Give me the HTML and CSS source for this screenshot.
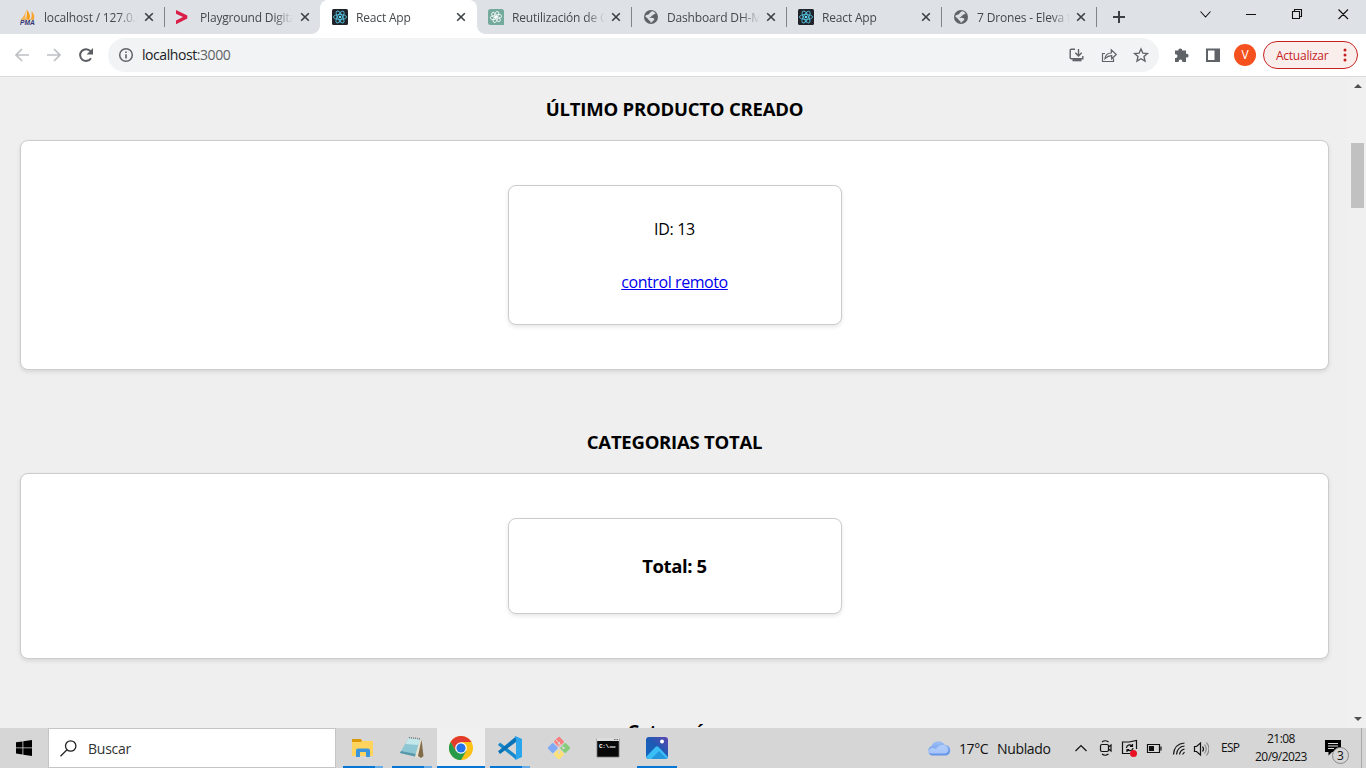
FILE: index.html
```html
<!DOCTYPE html>
<html lang="es">
<head>
<meta charset="utf-8">
<title>React App</title>
<link rel="stylesheet" href="styles.css">
</head>
<body>
<svg class="defs" width="0" height="0">
  <symbol id="x" viewBox="0 0 10 10"><path d="M1.2 1.2l7.6 7.6M8.8 1.2L1.2 8.8" stroke="#3c4043" stroke-width="1.6" fill="none"/></symbol>
  <symbol id="react" viewBox="0 0 16 16"><rect width="16" height="16" rx="1.5" fill="#20232a"/><g fill="none" stroke="#53bcd8" stroke-width=".9"><ellipse cx="8" cy="8" rx="6.6" ry="2.5"/><ellipse cx="8" cy="8" rx="6.6" ry="2.5" transform="rotate(60 8 8)"/><ellipse cx="8" cy="8" rx="6.6" ry="2.5" transform="rotate(120 8 8)"/></g><circle cx="8" cy="8" r="1.3" fill="#61dafb"/></symbol>
  <symbol id="globe" viewBox="0 0 16 16"><circle cx="8" cy="8" r="7" fill="#5f6368"/><path d="M9.500 2.300c1.400.4 2.500 1.200 3.200 2.300-1 0-1.200.9-2 1-.9.1-.8 1.100-1.700 1.200-.7.1-.6 1-1.300 1.100H6.500c0 .9 1 .8 2 .9 1.700.2 3 .5 2.800 1.700-.2 1.200-1.500 1-1.900 2-.2.8-1 1.200-1.600 1.100-.8-.1-.4-1.200-.5-1.800-1-.2-1.900-.9-2.100-1.900L2.300 7.500C2.600 6.300 3.400 5.900 4.500 5.800c1.200 0 1.400-.5 1.900-1.200.7-.3.500-1.200 1.300-1.600.4-.4 1-.7 1.800-.7z" fill="#dee1e6"/></symbol>
</svg>

<header class="tabstrip">
  <div class="tab wide">
    <svg class="fav" viewBox="0 0 16 16"><path d="M5.500 1.500v8.500H1.200C3.500 8 5 5 5.500 1.500z" fill="#f9b24e"/><path d="M6.500.5c3 3 4 6.500 3 9.500H6.300c.8-3 .8-6 .2-9.500z" fill="#f89c0e"/><path d="M11.500 2c2.500 2.500 3.300 5.500 2.500 8h-3c.8-2.500.9-5 .5-8z" fill="#f9a52b"/><path d="M1 10.500h13" stroke="#e9a24a" stroke-width=".8"/><text x="0" y="15.500" class="pma">PMA</text></svg>
    <span class="title">localhost / 127.0.0.1</span><svg class="close"><use href="#x"/></svg><i class="sep"></i>
  </div>
  <div class="tab wide">
    <svg class="fav" viewBox="0 0 16 16"><path d="M0 1l11.300 5.400v3.200L0 15.200v-3.800L7 8 0 4.800z" fill="#d91e48"/></svg>
    <span class="title">Playground Digital</span><svg class="close"><use href="#x"/></svg>
  </div>
  <div class="tab wide active">
    <svg class="fav"><use href="#react"/></svg><span class="title">React App</span><svg class="close"><use href="#x"/></svg>
  </div>
  <div class="tab">
    <svg class="fav" viewBox="0 0 16 16"><path d="M2.500 0h11A2.500 2.500 0 0 1 16 2.500V16H2.500A2.500 2.500 0 0 1 0 13.500v-11A2.500 2.500 0 0 1 2.500 0z" fill="#74aa9c"/><g fill="none" stroke="#fff" stroke-width=".8"><ellipse id="p" cx="8.700" cy="5.300" rx="1.900" ry="3" transform="rotate(28 8.700 5.300)"/><use href="#p" transform="rotate(60 8 8)"/><use href="#p" transform="rotate(120 8 8)"/><use href="#p" transform="rotate(180 8 8)"/><use href="#p" transform="rotate(240 8 8)"/><use href="#p" transform="rotate(300 8 8)"/></g></svg>
    <span class="title">Reutilización de Código</span><svg class="close"><use href="#x"/></svg><i class="sep"></i>
  </div>
  <div class="tab"><svg class="fav"><use href="#globe"/></svg><span class="title">Dashboard DH-Market</span><svg class="close"><use href="#x"/></svg><i class="sep"></i></div>
  <div class="tab"><svg class="fav"><use href="#react"/></svg><span class="title">React App</span><svg class="close"><use href="#x"/></svg><i class="sep"></i></div>
  <div class="tab"><svg class="fav"><use href="#globe"/></svg><span class="title">7 Drones - Eleva tu vuelo</span><svg class="close"><use href="#x"/></svg><i class="sep"></i></div>
  <svg class="plus" width="12" height="12" viewBox="0 0 12 12"><path d="M6 0v12M0 6h12" stroke="#3c4043" stroke-width="2"/></svg>
  <svg class="winctl" width="166" height="34" viewBox="0 0 166 34" fill="none" stroke="#111" stroke-width="1.100"><path d="M.5 11.500l5 5.500 5-5.500M46 14.500h10M92.500 11.500h7v7h-7zM94.500 11.500v-2h7v7h-2M138.500 9.500l9.500 9.500M148 9.500l-9.500 9.500"/></svg>
</header>

<div class="toolbar">
  <svg class="nav" width="80" height="20" viewBox="0 0 80 20" fill="none" stroke-width="1.700"><path d="M15 10H2.500M8 4l-6 6 6 6M33 10h12.500M40 4l6 6-6 6" stroke="#bdc0c3"/><path d="M77 13.200A5.900 5.900 0 1 1 76.500 6.200" stroke="#5a5e63" stroke-width="2"/><path d="M79 3v6.400h-6.400z" fill="#5a5e63"/></svg>
  <div class="omnibox">
    <svg width="16" height="16" viewBox="0 0 16 16"><circle cx="8" cy="8" r="6.300" fill="none" stroke="#5f6368" stroke-width="1.500"/><path d="M8 7.200v4.200M8 4.400v1.600" stroke="#5f6368" stroke-width="1.600"/></svg>
    <span class="url">localhost<span>:3000</span></span>
    <svg class="actions" width="82" height="18" viewBox="0 0 82 18" fill="none" stroke="#5f6368" stroke-width="1.400"><path d="M7 3.200H3.200q-1 0-1 1v7.600q0 1 1 1h11.600V10M10.500 3v6.500M7.300 6.700l3.200 3.200 3.200-3.200"/><path d="M4.500 14.200h9" stroke-width="2.200"/><path d="M37 7.500h-2.500V15.500h11V12.500M37 12.500c.5-3.500 2.700-5.500 6.300-5.500V3.800l5 4.700-4.600 4.300V9.700c-2.800 0-4.600.8-6.700 2.800z" stroke-width="1.200"/><path d="M73 3l1.900 4.200 4.500.4-3.400 3 1 4.400-4-2.300-4 2.300 1-4.400-3.400-3 4.500-.4z"/></svg>
  </div>
  <svg class="ext" width="48" height="18" viewBox="0 0 48 18"><path d="M2 4.500h3.300a2 2 0 0 1 4 0H13v3.300h.700a1.900 1.900 0 0 1 0 3.800H13V16H9.300v-.8a1.800 1.800 0 0 0-3.600 0v.8H2v-4h.6a1.900 1.900 0 0 0 0-3.800H2z" fill="#5f6368"/><path d="M33 2.500h14v13.500H33zM35 4.500v9.500h6.500V4.500z" fill="#5f6368" fill-rule="evenodd"/></svg>
  <div class="avatar">V</div>
  <div class="update"><span>Actualizar</span><svg width="4" height="14" viewBox="0 0 4 14" fill="#c5221f"><circle cx="2" cy="2" r="1.500"/><circle cx="2" cy="7" r="1.500"/><circle cx="2" cy="12" r="1.500"/></svg></div>
</div>

<div class="viewport">
  <main class="page">
    <h3 class="last">ÚLTIMO PRODUCTO CREADO</h3>
    <section class="panel">
      <div class="card product"><p>ID: 13</p><a href="#">control remoto</a></div>
    </section>
    <h3 class="cats">CATEGORIAS TOTAL</h3>
    <section class="panel">
      <div class="card total"><h3>Total: 5</h3></div>
    </section>
    <h3 class="next">Categorías</h3>
  </main>
  <div class="scrollbar"><i class="up"></i><i class="thumb"></i><i class="down"></i></div>
</div>

<footer class="taskbar">
  <div class="start"><svg width="16" height="16" viewBox="0 0 16 16"><path d="M0 2.300l6.500-.9v6.100H0zM7.300 1.300L16 0v7.500H7.300zM0 8.300h6.500v6.200L0 13.600zM7.300 8.300H16V16l-8.700-1.300z"/></svg></div>
  <div class="search"><svg width="17" height="17" viewBox="0 0 17 17" fill="none" stroke="#222" stroke-width="1.300"><circle cx="10.700" cy="6" r="5.200"/><path d="M7 9.700L.5 16.300"/></svg><span>Buscar</span></div>
  <div class="apps">
    <div class="app run stack"><svg width="24" height="24" viewBox="0 0 24 24"><path d="M1 3h9l1 2h11v15H1z" fill="#ffd45e"/><path d="M1 3h9l1 2-1 1H1z" fill="#dd9a08"/><path d="M5 21v-6.500q0-2 2-2h10q2 0 2 2V21h-4v-5H9v5z" fill="#3a95dc"/></svg></div>
    <div class="app run stack"><svg width="24" height="24" viewBox="0 0 24 24"><path d="M9 1.500l13 2L21 22l-6-1z" fill="#e9e2cf"/><path d="M21.500 3.500L23.500 20 21 22l-3-2z" fill="#806c48"/><path d="M8.500 2L20 3.500l-5 17L0 17z" fill="#8ec7d3"/><path d="M8.500 2L20 3.500 18.500 9 5.500 8z" fill="#c4e7ec"/><path d="M15 20.500L0 17l1-2 14.500 3z" fill="#5798aa"/><path d="M9 1.500l12 1.500" stroke="#777" stroke-width="1.500" stroke-dasharray="1 1"/></svg></div>
    <div class="app run focus"><svg width="24" height="24" viewBox="0 0 24 24"><circle cx="12" cy="12" r="12" fill="#fbc116"/><path d="M1.600 6A12 12 0 0 1 22.400 6H12L6.800 15z" fill="#e33b2e"/><path d="M1.600 6A12 12 0 0 0 12 24l5.200-9H6.800z" fill="#269c4b"/><circle cx="12" cy="12" r="5.800" fill="#fff"/><circle cx="12" cy="12" r="4.600" fill="#2473e8"/></svg></div>
    <div class="app run stack"><svg width="24" height="24" viewBox="0 0 24 24"><path d="M2 6.500L18 19v4.500L0 9z" fill="#1688cc"/><path d="M0 15.200L18 .5V6L2 18z" fill="#0873b7"/><path d="M17.500 0L24 3v18l-6.500 3-1-1.500c1 .2 1.500-.3 1.500-1.500V3c0-1.200-.5-1.700-1.500-1.500z" fill="#2ba6ec"/></svg></div>
    <div class="app"><svg width="24" height="24" viewBox="0 0 24 24"><g transform="rotate(45 12 12)"><rect x="3.800" y="3.800" width="7.600" height="7.600" rx="1" fill="#f97f80"/><rect x="12.600" y="3.800" width="7.600" height="7.600" rx="1" fill="#87cc7b"/><rect x="3.800" y="12.600" width="7.600" height="7.600" rx="1" fill="#80aaf5"/><rect x="12.600" y="12.600" width="7.600" height="7.600" rx="1" fill="#fce175"/></g><path d="M8.500 3.500l4 4M12 8v8M13 8l3.500 4" stroke="#d8d8d8" stroke-width="1"/><circle cx="12" cy="7" r="1.200" fill="#d8d8d8"/><circle cx="12" cy="17" r="1.200" fill="#d8d8d8"/><circle cx="16.500" cy="12" r="1.200" fill="#d8d8d8"/></svg></div>
    <div class="app"><svg width="24" height="24" viewBox="0 0 24 24"><path d="M1 2.500h22V21H1z" fill="#080808" stroke="#777" stroke-width=".8"/><path d="M1 2h22v3H1z" fill="#ddd"/><path d="M18 3.500h4" stroke="#666" stroke-width="1" stroke-dasharray="1 .5"/><text class="cmd" x="3" y="11.500">C:\</text><path d="M13.500 11h6" stroke="#eee" stroke-width="1.200"/></svg></div>
    <div class="app run"><svg width="24" height="24" viewBox="0 0 24 24"><defs><linearGradient id="g" x1="0" y1="1" x2="1" y2="0"><stop stop-color="#1369c5"/><stop offset=".5" stop-color="#1b5bb4"/><stop offset="1" stop-color="#6543b0"/></linearGradient><clipPath id="ph"><rect x="1" y="1" width="22" height="22" rx="3"/></clipPath></defs><g clip-path="url(#ph)"><rect width="24" height="24" fill="url(#g)"/><path d="M0 22L10.500 11q1.500-1.500 3 0L24 22v2H0z" fill="#3bbdf5"/><path d="M5 24l9-9 9 9z" fill="#2597df"/></g><circle cx="17" cy="5.500" r="2" fill="#fff"/></svg></div>
  </div>
  <div class="weather"><svg width="24" height="16" viewBox="0 0 24 16"><defs><linearGradient id="c" x2="0" y2="1"><stop stop-color="#a0c0f5"/><stop offset="1" stop-color="#5f92e8"/></linearGradient></defs><path d="M5 15.500A5 5 0 0 1 4.500 6 7.500 7.500 0 0 1 18 5a5.300 5.300 0 0 1 1 10.500z" fill="url(#c)"/><path d="M1 12c1-3.500 5-5 8-3 2-4 8-5.500 11-2 2 3 1 6-2 6.500H5q-3 0-4-1.500z" fill="#c7dcff" opacity=".65"/></svg><span class="deg">17°C</span><span class="sky">Nublado</span></div>
  <svg class="tray" width="134" height="22" viewBox="0 0 134 22" fill="none" stroke="#111" stroke-width="1.200"><path d="M.5 14l5.500-5.500L11.500 14"/><path d="M27 7.500h5q1.500 0 1.500 1.500v4q0 1.500-1.500 1.500h-5q-1.500 0-1.500-1.500V9q0-1.500 1.500-1.500zM33.500 10l2.500-2v6l-2.500-2M27 5q3-2.500 6.500 0M27 17q3 2.500 6.500 0"/><path d="M61.500 12V3.500L54 5h-6.500v11.500H55M51.500 11c0-3 3.500-4 5.500-2M57.500 7v2.300H55M58 11c0 2.500-3.500 3.500-5.500 1.800M52 15v-2.300h2.300"/><circle cx="58.500" cy="16.500" r="3.500" fill="#e81123" stroke="none"/><path d="M72.500 7.500h12v8h-12zM86 9.500v4"/><path d="M74 9h5v5h-5z" fill="#111" stroke="none"/><path d="M98.500 17.500C99 10.500 103 6.500 109.500 6M101.500 17.500c.5-5 3-8 8-8.500M104.500 17.500c.5-3 2-4.700 5-5.500M107.500 17.500l2-2.500"/><path d="M119.500 9.500h2L125.500 6v12l-4-3.500h-2z"/><path d="M127.500 9.500q2 2.500 0 5"/><path d="M129.500 7.500q3.500 4.500 0 9M131.500 5.500q5 6.500 0 13" stroke="#888"/></svg>
  <span class="lang">ESP</span>
  <div class="clock"><span>21:08</span><span>20/9/2023</span></div>
  <div class="notif"><svg width="17" height="17" viewBox="0 0 17 17"><path d="M0 0h16v12H7l-3.500 3.500V12H0z"/><path d="M3 3.500h10M3 6h10M3 8.500h6" stroke="#ddd"/></svg><b>3</b></div>
</footer>
</body>
</html>
```
FILE: styles.css
```css
* { box-sizing: border-box; }
body { margin: 0; width: 1366px; height: 768px; overflow: hidden; display: flex; flex-direction: column; font-family: "Open Sans", "Noto Sans", sans-serif; background: #efefef; }
svg { display: block; flex: none; }
.defs { position: absolute; }

.tabstrip { height: 34px; flex: none; display: flex; align-items: center; padding-left: 8px; background: #dee1e6; }
.tab { position: relative; width: 155px; height: 34px; flex: none; display: flex; align-items: center; padding-left: 12px; color: #45494d; }
.tab.wide { width: 156px; }
.fav { width: 16px; height: 16px; margin-right: 8px; }
.pma { font: italic bold 6.600px "Liberation Sans", sans-serif; fill: #2f3370; }
.title { width: 94px; overflow: hidden; white-space: nowrap; font-size: 12px; letter-spacing: -0.17px; -webkit-mask-image: linear-gradient(90deg, #000 74px, transparent 93px); mask-image: linear-gradient(90deg, #000 74px, transparent 93px); }
.close { width: 10px; height: 10px; margin-left: 5px; }
.wide .close { margin-left: 6px; }
.sep { position: absolute; right: -1px; top: 7px; width: 1px; height: 20px; background: #808387; }
.tab.active { background: #fff; border-radius: 8px 8px 0 0; box-shadow: 1px 0 #fff; }
.tab.active::before, .tab.active::after { content: ""; position: absolute; bottom: 0; width: 8px; height: 8px; }
.tab.active::before { left: -8px; background: radial-gradient(circle at 0 0, transparent 7.5px, #fff 8px); }
.tab.active::after { right: -9px; background: radial-gradient(circle at 100% 0, transparent 7.5px, #fff 8px); }
.plus { margin-left: 17px; }
.winctl { margin-left: 75px; }

.toolbar { height: 43px; flex: none; display: flex; align-items: center; padding: 0 8px 0 14px; background: #fff; border-bottom: 1px solid #d9dbdb; }
.omnibox { width: 1051px; height: 34px; margin-left: 14px; border-radius: 17px; background: #f1f3f4; display: flex; align-items: center; padding: 0 9px 0 10px; }
.url { margin: -2px 0 0 8px; font-size: 14px; letter-spacing: -0.43px; color: #202124; }
.url span { color: #5f6368; }
.actions { margin-left: auto; }
.ext { margin-left: 14px; }
.avatar { width: 22px; height: 22px; margin-left: 13px; border-radius: 50%; background: #f4511e; color: #fff; font-size: 12px; line-height: 22px; text-align: center; }
.update { width: 95px; height: 28px; margin-left: 7px; border: 1px solid #c5221f; border-radius: 14px; background: #faeeed; color: #c5221f; font-size: 12px; letter-spacing: -0.25px; display: flex; align-items: center; justify-content: space-between; padding: 0 10px 0 12px; }

.viewport { flex: 1; min-height: 0; display: flex; overflow: hidden; }
.page { width: 1349px; padding: 0 20px; text-align: center; color: #000; font-size: 16px; }
.page h3 { margin: 0; font-size: 18.5px; line-height: 26px; font-weight: 700; }
.page .last { margin: 19px 0 18px; letter-spacing: -0.2px; }
.page .cats { margin: 59px 0 18px; letter-spacing: -0.24px; }
.page .next { margin-top: 59px; letter-spacing: -0.4px; }
.panel { padding: 44px; background: #fff; border: 1px solid #ccc; border-radius: 8px; box-shadow: 0 2px 4px rgba(0,0,0,.1); display: flex; justify-content: center; }
.card { width: 334px; background: #fff; border: 1px solid #ccc; border-radius: 8px; box-shadow: 0 2px 4px rgba(0,0,0,.1); display: flex; flex-direction: column; align-items: center; }
.product { height: 140px; padding-top: 31px; line-height: 24px; letter-spacing: -0.3px; }
.product p { margin: 0 0 29px; }
.product a { color: #00e; text-decoration: underline; letter-spacing: -0.42px; }
.total { height: 96px; justify-content: center; }
.page .total h3 { letter-spacing: -0.38px; }
.scrollbar { width: 17px; background: #f0f0f0; display: flex; flex-direction: column; align-items: center; }
.up, .down { border: 4px solid transparent; }
.up { border-bottom-color: #505050; border-top: 0; margin: 7px 0 55px; }
.down { border-top-color: #505050; border-bottom: 0; margin: auto 0 7px; }
.thumb { width: 13px; height: 65px; background: #c1c1c1; }

.taskbar { height: 40px; flex: none; display: flex; align-items: center; background: #d6d6d6; color: #111; position: relative; }
.start { width: 48px; padding-left: 16px; }
.search { width: 288px; height: 40px; background: #fff; border: 1px solid #c5c5c5; display: flex; align-items: center; padding-left: 11px; font-size: 14px; color: #333; }
.search span { margin-left: 11px; letter-spacing: -0.25px; }
.apps { display: flex; margin-left: 3px; height: 40px; gap: 1px; }
.app { width: 48px; height: 40px; display: flex; justify-content: center; align-items: center; position: relative; }
.run::after { content: ""; position: absolute; left: 4px; bottom: 0; width: 40px; height: 2px; background: #0676d5; }
.stack::after { background: linear-gradient(90deg, #0676d5 32px, #67ace6 32px); }
.focus { background: #f0f0f0; left: -2px; }
.focus { left: 0; }
.focus::after { left: 0; width: 48px; }
.cmd { font: bold 6px "Liberation Mono", monospace; letter-spacing: -0.4px; fill: #fff; }
.weather { margin-left: 246px; display: flex; align-items: center; font-size: 14px; }
.deg { width: 38px; margin-left: 8px; letter-spacing: -0.4px; white-space: nowrap; }
.sky { width: 54px; letter-spacing: -0.35px; white-space: nowrap; }
.tray { margin-left: 24px; }
.lang { width: 20px; margin: -1px 0 0 12px; font-size: 12px; letter-spacing: -0.7px; white-space: nowrap; }
.clock { width: 56px; margin-left: 12px; display: flex; flex-direction: column; align-items: center; font-size: 12px; line-height: 18px; letter-spacing: -0.55px; white-space: nowrap; }
.notif { position: relative; margin-left: 16px; }
.notif b { position: absolute; left: 7px; top: 7px; width: 17px; height: 17px; border: 1px solid #888; border-radius: 50%; background: #d6d6d6; font-size: 12px; font-weight: 400; line-height: 15px; text-align: center; }
.taskbar::after { content: ""; position: absolute; right: 4px; top: 0; width: 1px; height: 40px; background: #aaa; }
```
